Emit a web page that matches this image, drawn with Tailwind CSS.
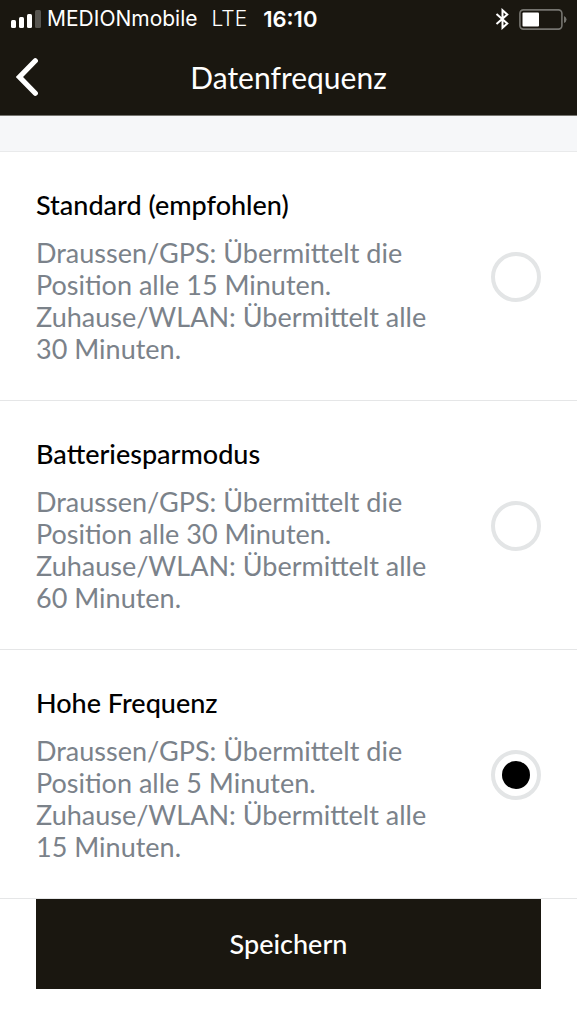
<!DOCTYPE html>
<html lang="de">
<head>
<meta charset="utf-8">
<meta name="viewport" content="width=device-width, initial-scale=1">
<title>Datenfrequenz</title>
<script src="https://cdn.jsdelivr.net/npm/@tailwindcss/browser@4"></script>
</head>
<body class="min-h-screen bg-white font-['Lato','Carlito',sans-serif] text-[27px] leading-8 text-black">
<header class="border-b border-[#75746f] bg-[#1a1710] text-white">
  <div class="flex h-[38px] items-center pr-2.5 pl-[11px] font-['Inter',sans-serif] text-[21px] leading-6">
    <svg class="mr-1.5 h-[18px] w-[30px] shrink-0" viewBox="0 0 30 18" fill="#fff" aria-hidden="true">
      <rect x="0" y="10" width="5" height="8" rx="1.5"/>
      <rect x="8" y="7" width="5" height="11" rx="1.5"/>
      <rect x="16" y="4" width="5" height="14" rx="1.5"/>
      <rect x="24" y="0" width="6" height="18" rx="1.5" opacity=".27"/>
    </svg>
    <span>MEDIONmobile</span>
    <span class="ml-3.5 font-light">LTE</span>
    <span class="ml-4 text-[22px] font-semibold">16:10</span>
    <svg class="mr-2.5 ml-auto h-[22px] w-[14px]" viewBox="0 0 14 22" fill="none" stroke="#fff" stroke-width="2" aria-hidden="true">
      <path d="M1.500 6 12.300 15.500 7.500 19.800V2.200L12.300 6.500 1.500 16"/>
    </svg>
    <svg class="h-[21px] w-[48px]" viewBox="0 0 48 21" aria-hidden="true">
      <rect x=".9" y=".9" width="42" height="19.200" rx="3.500" fill="none" stroke="#75746f" stroke-width="1.600"/>
      <rect x="3.500" y="3.500" width="16.500" height="14" rx="1" fill="#fff"/>
      <path d="M45 7v7q2.500-1 2.500-3.500T45 7Z" fill="#75746f"/>
    </svg>
  </div>
  <div class="grid h-[77px] grid-cols-[48px_1fr_48px] items-center">
    <button type="button" aria-label="Zurück" class="flex h-full items-center pl-4">
      <svg class="h-[38px] w-[22px]" viewBox="0 0 22 38" fill="none" stroke="#fff" stroke-width="5.200" stroke-linecap="round" stroke-linejoin="miter" aria-hidden="true"><path d="M19.300 2.800 3.500 19 19.300 35.200"/></svg>
    </button>
    <h1 class="text-center text-[30px] leading-9">Datenfrequenz</h1>
  </div>
</header>
<main>
  <form>
    <div class="h-9 border-b border-[#e9eaeb] bg-[#f6f7f9]"></div>
    <fieldset aria-label="Datenfrequenz">
      <label class="flex items-center gap-9 border-b border-[#e5e6e7] px-9 pt-9 pb-[35px]">
        <span class="flex flex-1 flex-col gap-[15px]">
          <span class="leading-[34px] font-medium">Standard (empfohlen)</span>
          <span class="text-[#7b828a]">Draussen/GPS: Übermittelt die<br>Position alle 15 Minuten.<br>Zuhause/WLAN: Übermittelt alle<br>30 Minuten.</span>
        </span>
        <input type="radio" name="freq" class="size-[50px] shrink-0 appearance-none rounded-full border-4 border-[#e3e5e6] bg-white bg-clip-content p-[7px] checked:bg-black">
      </label>
      <label class="flex items-center gap-9 border-b border-[#e5e6e7] px-9 pt-9 pb-[35px]">
        <span class="flex flex-1 flex-col gap-[15px]">
          <span class="leading-[34px] font-medium">Batteriesparmodus</span>
          <span class="text-[#7b828a]">Draussen/GPS: Übermittelt die<br>Position alle 30 Minuten.<br>Zuhause/WLAN: Übermittelt alle<br>60 Minuten.</span>
        </span>
        <input type="radio" name="freq" class="size-[50px] shrink-0 appearance-none rounded-full border-4 border-[#e3e5e6] bg-white bg-clip-content p-[7px] checked:bg-black">
      </label>
      <label class="flex items-center gap-9 border-b border-[#e5e6e7] px-9 pt-9 pb-[35px]">
        <span class="flex flex-1 flex-col gap-[15px]">
          <span class="leading-[34px] font-medium">Hohe Frequenz</span>
          <span class="text-[#7b828a]">Draussen/GPS: Übermittelt die<br>Position alle 5 Minuten.<br>Zuhause/WLAN: Übermittelt alle<br>15 Minuten.</span>
        </span>
        <input type="radio" name="freq" checked class="size-[50px] shrink-0 appearance-none rounded-full border-4 border-[#e3e5e6] bg-white bg-clip-content p-[7px] checked:bg-black">
      </label>
    </fieldset>
    <div class="px-9 pb-9">
      <button type="button" class="h-[90px] w-full bg-[#1a1710] font-medium text-white">Speichern</button>
    </div>
  </form>
</main>
</body>
</html>
